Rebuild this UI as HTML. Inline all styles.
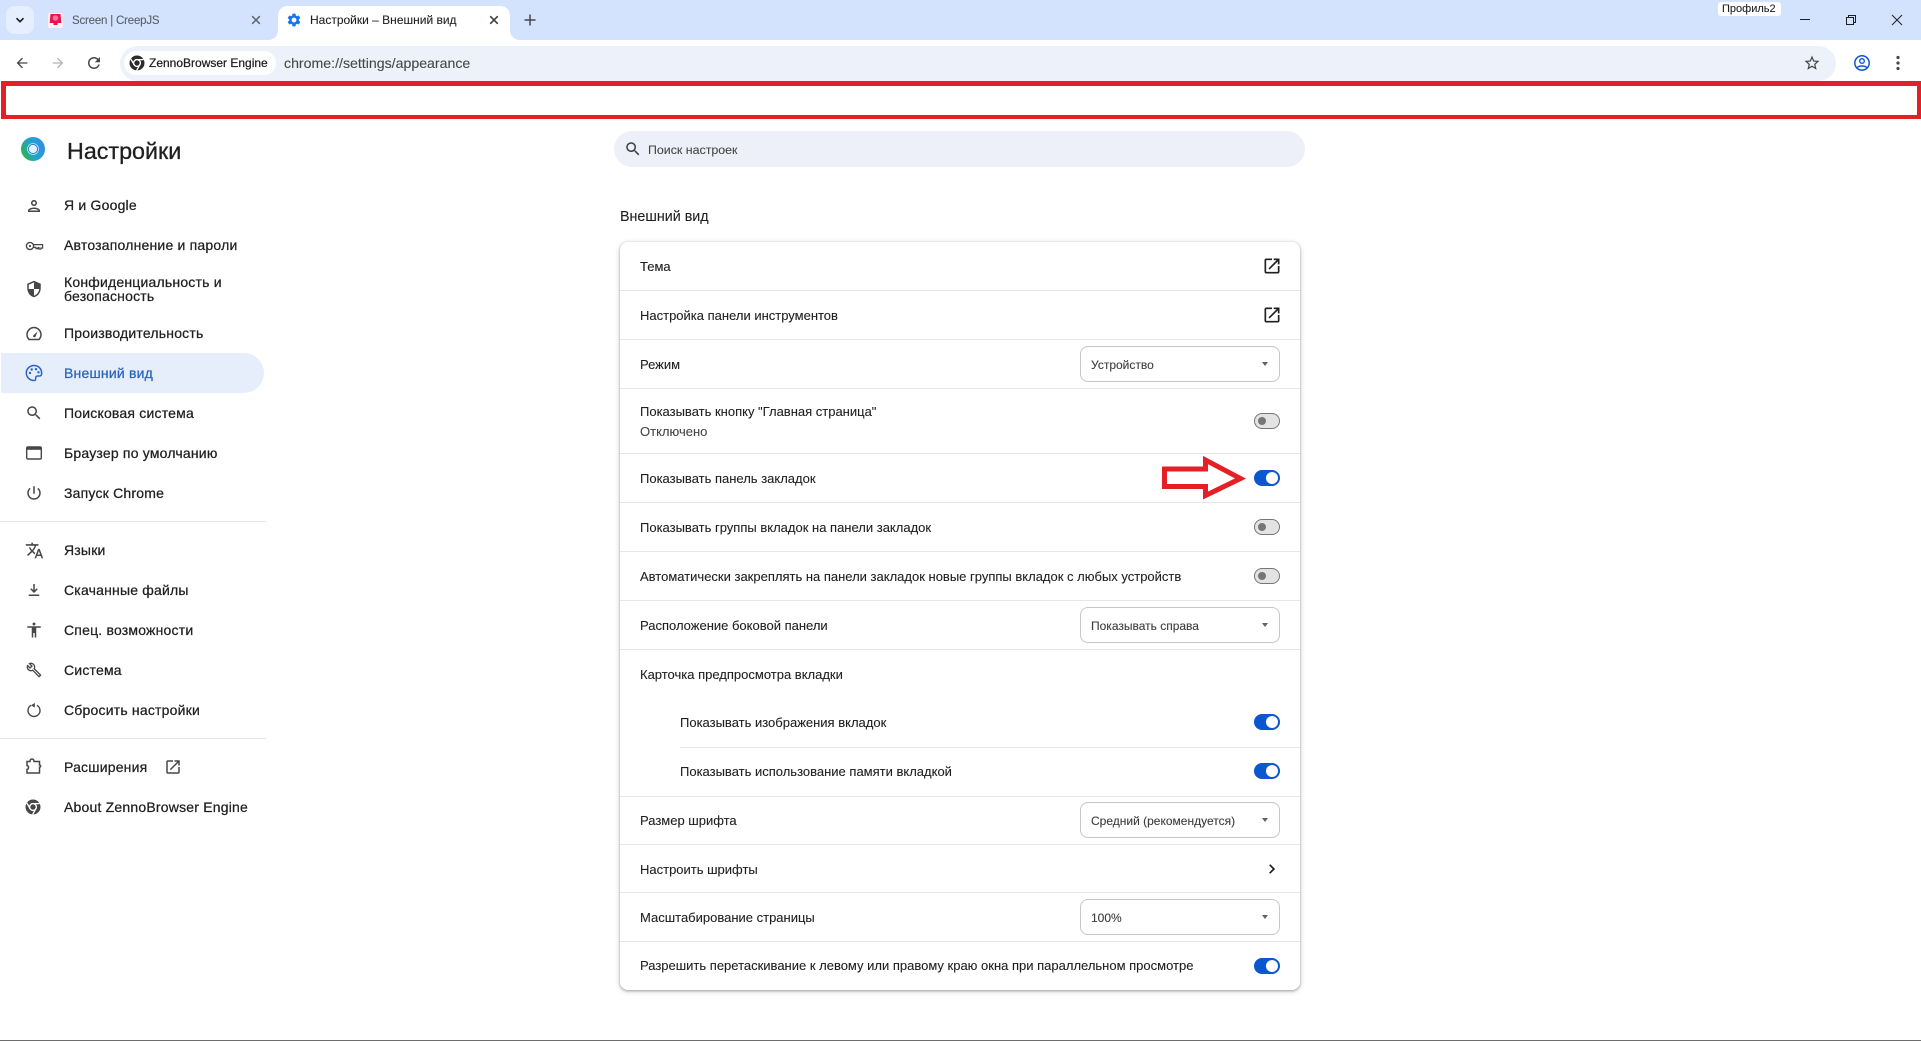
<!DOCTYPE html>
<html lang="ru"><head><meta charset="utf-8"><title>Настройки – Внешний вид</title>
<style>
html,body{margin:0;padding:0;width:1921px;height:1041px;overflow:hidden;background:#fff}
body{position:relative;font-family:"Liberation Sans",sans-serif;color:#1f1f1f}
.a{position:absolute}
.t{position:absolute;white-space:nowrap;line-height:18px;height:18px;font-size:13px;-webkit-text-stroke:.1px currentColor}
.n{font-size:14px;letter-spacing:.2px;-webkit-text-stroke:.25px currentColor;left:64px;color:#1f1f1f;margin-top:-1px}
.c{left:640px}
.r{margin-top:1px}
svg{position:absolute;overflow:visible}
.ic{fill:#474747}
.sep{position:absolute;left:620px;width:680px;height:1px;background:#e6e6e6}
.sel{position:absolute;left:1080px;width:198px;height:34px;border:1px solid #c7c7c7;border-radius:8px;background:#fff}
.sel span{position:absolute;left:10px;top:9px;line-height:18px;font-size:12px;color:#3c3c3c;white-space:nowrap;-webkit-text-stroke:.1px currentColor}
.sel i{position:absolute;left:181px;top:15px;width:0;height:0;border-left:3.5px solid transparent;border-right:3.5px solid transparent;border-top:4px solid #5f6368}
.on,.off{position:absolute;left:1254px;width:26px;height:16px;border-radius:8px;box-sizing:border-box}
.on{background:#0b57d0}
.on:after{content:"";position:absolute;right:2px;top:2px;width:12px;height:12px;border-radius:50%;background:#fff}
.off{background:#e3e3e3;border:1.5px solid #747775}
.off:after{content:"";position:absolute;left:2.5px;top:2.5px;width:8px;height:8px;border-radius:50%;background:#747775}
</style></head><body>

<!-- tab strip -->
<div class="a" style="left:0;top:0;width:1921px;height:40px;background:#d3e3fd"></div>
<div class="a" style="left:6px;top:6px;width:28px;height:28px;border-radius:9px;background:#e6effd"></div>
<svg style="left:14px;top:14px" width="12" height="12" viewBox="0 0 12 12"><path d="M2.5 4.200L6 7.700l3.500-3.500" fill="none" stroke="#1f1f1f" stroke-width="1.700"/></svg>
<!-- creepjs favicon -->
<div class="a" style="left:48px;top:13px;width:15px;height:15px;background:#fdeef2;border-radius:2px"></div>
<svg style="left:49px;top:13px" width="13" height="14" viewBox="0 0 13 14"><path d="M1.500 1h10l.8 9H8.500v2h-4v-2H.7z" fill="#e8134f"/><circle cx="6.500" cy="5" r="2.800" fill="#f8719a"/></svg>
<div class="t" style="left:72px;top:12px;font-size:11.500px;letter-spacing:-.2px;color:#5a5f66">Screen | CreepJS</div>
<svg style="left:251px;top:15px" width="10" height="10" viewBox="0 0 10 10"><path d="M1.200 1.200l7.600 7.600M8.800 1.200L1.200 8.800" stroke="#5f6368" stroke-width="1.500"/></svg>
<!-- active tab -->
<svg style="left:268px;top:6px" width="252" height="34" viewBox="0 0 252 34"><path d="M0 34c6 0 10-4 10-10V10C10 4 14 0 20 0h212c6 0 10 4 10 10v14c0 6 4 10 10 10z" fill="#fff"/></svg>
<svg style="left:286px;top:12px" width="16" height="16" viewBox="0 0 24 24"><path fill="#1a73e8" d="M19.14 12.94c.04-.3.06-.61.06-.94 0-.32-.02-.64-.07-.94l2.03-1.58c.18-.14.23-.41.12-.61l-1.92-3.32c-.12-.22-.37-.29-.59-.22l-2.39.96c-.5-.38-1.03-.7-1.62-.94l-.36-2.54c-.04-.24-.24-.41-.48-.41h-3.84c-.24 0-.43.17-.47.41l-.36 2.54c-.59.24-1.13.57-1.62.94l-2.39-.96c-.22-.08-.47 0-.59.22L2.74 8.87c-.12.21-.08.47.12.61l2.03 1.58c-.05.3-.09.63-.09.94s.02.64.07.94l-2.03 1.58c-.18.14-.23.41-.12.61l1.92 3.32c.12.22.37.29.59.22l2.39-.96c.5.38 1.03.7 1.62.94l.36 2.54c.05.24.24.41.48.41h3.84c.24 0 .44-.17.47-.41l.36-2.54c.59-.24 1.13-.56 1.62-.94l2.39.96c.22.08.47 0 .59-.22l1.92-3.32c.12-.22.07-.47-.12-.61l-2.01-1.58zM12 15.6c-1.98 0-3.6-1.62-3.6-3.6s1.62-3.6 3.6-3.6 3.6 1.62 3.6 3.6-1.62 3.6-3.6 3.6z"/></svg>
<div class="t" style="left:310px;top:11px;font-size:12px;color:#1f1f1f">Настройки – Внешний вид</div>
<svg style="left:489px;top:15px" width="10" height="10" viewBox="0 0 10 10"><path d="M1.200 1.200l7.600 7.600M8.800 1.200L1.200 8.800" stroke="#3c4043" stroke-width="1.600"/></svg>
<svg style="left:524px;top:14px" width="12" height="12" viewBox="0 0 12 12"><path d="M6 .5v11M.5 6h11" stroke="#474747" stroke-width="1.500"/></svg>
<!-- window controls -->
<div class="a" style="left:1718px;top:2px;width:63px;height:14px;background:#fff;border-radius:3px"></div>
<div class="t" style="left:1722px;top:0;font-size:11px;color:#1f1f1f">Профиль2</div>
<svg style="left:1800px;top:19px" width="10" height="2"><path d="M0 .5h10" stroke="#1f1f1f"/></svg>
<svg style="left:1846px;top:15px" width="10" height="10" viewBox="0 0 10 10"><path d="M.5 2.500h7v7h-7zM2.500 2.500v-2h7v7h-2" fill="none" stroke="#1f1f1f"/></svg>
<svg style="left:1892px;top:15px" width="10" height="10" viewBox="0 0 10 10"><path d="M0 0l10 10M10 0L0 10" stroke="#1f1f1f"/></svg>

<!-- toolbar -->
<div class="a" style="left:0;top:40px;width:1921px;height:41px;background:#fff;border-radius:8px 8px 0 0"></div>
<svg style="left:14px;top:55px" width="16" height="16" viewBox="0 0 24 24"><path fill="#474747" d="M20 11H7.83l5.59-5.59L12 4l-8 8 8 8 1.41-1.41L7.83 13H20v-2z"/></svg>
<svg style="left:50px;top:55px" width="16" height="16" viewBox="0 0 24 24"><path fill="#b3b5b8" transform="matrix(-1 0 0 1 24 0)" d="M20 11H7.83l5.59-5.59L12 4l-8 8 8 8 1.41-1.41L7.83 13H20v-2z"/></svg>
<svg style="left:85px;top:54px" width="18" height="18" viewBox="0 0 24 24"><path fill="#474747" d="M17.65 6.35C16.2 4.9 14.21 4 12 4c-4.42 0-7.99 3.58-7.99 8s3.57 8 7.99 8c3.73 0 6.84-2.55 7.73-6h-2.08c-.82 2.33-3.04 4-5.65 4-3.31 0-6-2.69-6-6s2.69-6 6-6c1.66 0 3.14.69 4.22 1.78L13 11h7V4l-2.35 2.35z"/></svg>
<div class="a" style="left:120px;top:46px;width:1716px;height:35px;background:#edf2fa;border-radius:18px"></div>
<div class="a" style="left:124px;top:51px;width:152px;height:24px;background:#fff;border-radius:12px"></div>
<svg style="left:129px;top:55px" width="16" height="16" viewBox="0 0 16 16"><circle cx="8" cy="8" r="7.500" fill="#2b2b2b"/><circle cx="8" cy="8" r="3.400" fill="none" stroke="#fff" stroke-width="1.400"/><path d="M8 4.600h6.600M5.100 9.700L1.800 4M10.900 9.700L7.600 15.400" stroke="#fff" stroke-width="1.300"/></svg>
<div class="t" style="left:149px;top:54px;font-size:12px;-webkit-text-stroke:.25px #1f1f1f;color:#1f1f1f">ZennoBrowser Engine</div>
<div class="t" style="left:284px;top:54px;font-size:14.150px;color:#474747">chrome://settings/appearance</div>
<svg style="left:1803px;top:54px" width="18" height="18" viewBox="0 0 24 24"><path fill="#474747" d="M22 9.24l-7.19-.62L12 2 9.19 8.63 2 9.24l5.46 4.73L5.82 21 12 17.27 18.18 21l-1.63-7.03L22 9.24zM12 15.4l-3.76 2.27 1-4.28-3.32-2.88 4.38-.38L12 6.1l1.71 4.04 4.38.38-3.32 2.88 1 4.28L12 15.4z"/></svg>
<svg style="left:1854px;top:55px" width="16" height="16" viewBox="0 0 16 16"><circle cx="8" cy="8" r="7.200" fill="none" stroke="#0b57d0" stroke-width="1.500"/><circle cx="8" cy="6" r="2.300" fill="none" stroke="#0b57d0" stroke-width="1.400"/><path d="M3.200 12.600C5 10.400 11 10.400 12.800 12.600" fill="none" stroke="#0b57d0" stroke-width="1.500"/></svg>
<svg style="left:1896px;top:55px" width="4" height="16" viewBox="0 0 4 16"><circle cx="2" cy="2.500" r="1.600" fill="#474747"/><circle cx="2" cy="8" r="1.600" fill="#474747"/><circle cx="2" cy="13.500" r="1.600" fill="#474747"/></svg>

<!-- red annotation box -->
<div class="a" style="left:1px;top:81px;width:1920px;height:37.500px;box-sizing:border-box;border:solid #e41f26;border-width:5px 4.500px 4.500px 5px;background:#fff"></div>

<!-- sidebar -->
<svg style="left:21px;top:137px" width="24" height="24" viewBox="0 0 24 24"><defs><linearGradient id="g" x1="0" y1=".7" x2="1" y2=".3"><stop offset="0" stop-color="#2fb344"/><stop offset=".45" stop-color="#22a5c9"/><stop offset="1" stop-color="#2f8cf0"/></linearGradient></defs><circle cx="12" cy="12" r="12" fill="url(#g)"/><circle cx="12" cy="12" r="5.800" fill="#e4f3fb"/><circle cx="12" cy="12" r="4.600" fill="none" stroke="#1f80d0" stroke-width="1"/></svg>
<div class="t" style="left:67px;top:137px;font-size:23.300px;line-height:28px;height:28px;-webkit-text-stroke:.3px #1f1f1f">Настройки</div>

<div class="a" style="left:1px;top:353px;width:263px;height:40px;background:#e6eefb;border-radius:0 20px 20px 0"></div>
<div class="a" style="left:0;top:521px;width:266px;height:1px;background:#e6e6e6"></div>
<div class="a" style="left:0;top:738px;width:266px;height:1px;background:#e6e6e6"></div>

<svg style="left:25px;top:197px" width="18" height="18" viewBox="0 0 24 24"><path class="ic" d="M12 6c1.100 0 2 .9 2 2s-.9 2-2 2-2-.9-2-2 .9-2 2-2m0 10c2.700 0 5.800 1.290 6 2H6c.23-.72 3.310-2 6-2m0-12C9.790 4 8 5.790 8 8s1.790 4 4 4 4-1.790 4-4-1.790-4-4-4zm0 10c-2.670 0-8 1.340-8 4v2h16v-2c0-2.660-5.330-4-8-4z"/></svg>
<div class="t n" style="top:197px">Я и Google</div>
<svg style="left:25px;top:237px" width="18" height="18" viewBox="0 0 18 18"><circle cx="5" cy="9" r="3.600" fill="none" stroke="#474747" stroke-width="1.400"/><circle cx="5" cy="9" r="1.100" fill="#474747"/><path d="M8.600 7.600h9v3.400h-1.600v1h-2v-1.400h-1v1h-2V10.400H8.600" fill="none" stroke="#474747" stroke-width="1.200"/></svg>
<div class="t n" style="top:237px">Автозаполнение и пароли</div>
<svg style="left:25px;top:280px" width="18" height="18" viewBox="0 0 24 24"><path class="ic" d="M12 1L3 5v6c0 5.550 3.840 10.740 9 12 5.160-1.260 9-6.450 9-12V5l-9-4zm0 10.990h7c-.53 4.120-3.280 7.790-7 8.940V12H5V6.300l7-3.110v8.800z"/></svg>
<div class="t n" style="top:274px">Конфиденциальность и</div>
<div class="t n" style="top:288px">безопасность</div>
<svg style="left:25px;top:324px" width="18" height="18" viewBox="0 0 18 18"><path d="M4 15.500h10c1.300-1.500 2.400-3.400 1.900-6C15.300 6 12.300 3.500 9 3.500 5.700 3.500 2.700 6 2.100 9.500c-.5 2.600.6 4.500 1.900 6z" fill="none" stroke="#474747" stroke-width="1.500"/><path d="M8 11.800l4.500-4.300-2 5.300c-.8 1-3 .2-2.500-1z" fill="#474747"/></svg>
<div class="t n" style="top:325px">Производительность</div>
<svg style="left:25px;top:364px" width="18" height="18" viewBox="0 0 18 18"><path d="M9 1.500C4.800 1.500 1.300 4.800 1.300 9S4.800 16.500 9 16.500c1.300 0 1.900-.8 1.700-1.800-.3-1.300.3-2.700 2-2.700h1.800c1.400 0 2.300-1 2.200-2.800C16.500 4.500 13.200 1.500 9 1.500z" fill="none" stroke="#2a63bf" stroke-width="1.500"/><circle cx="5" cy="9" r="1.200" fill="#2a63bf"/><circle cx="6.700" cy="5.500" r="1.200" fill="#2a63bf"/><circle cx="11" cy="5.200" r="1.200" fill="#2a63bf"/><circle cx="13.500" cy="8.300" r="1.200" fill="#2a63bf"/></svg>
<div class="t n" style="top:365px;color:#2a63bf">Внешний вид</div>
<svg style="left:25px;top:404px" width="18" height="18" viewBox="0 0 24 24"><path class="ic" d="M15.500 14h-.79l-.28-.27C15.410 12.590 16 11.110 16 9.500 16 5.910 13.090 3 9.500 3S3 5.910 3 9.500 5.910 16 9.500 16c1.610 0 3.090-.59 4.230-1.570l.27.28v.79l5 4.990L20.490 19l-4.990-5zm-6 0C7.010 14 5 11.990 5 9.500S7.010 5 9.500 5 14 7.010 14 9.500 11.990 14 9.500 14z"/></svg>
<div class="t n" style="top:405px">Поисковая система</div>
<svg style="left:26px;top:445px" width="16" height="16" viewBox="0 0 16 16"><rect x=".7" y="2" width="14.600" height="12" rx="1.300" fill="none" stroke="#474747" stroke-width="1.400"/><rect x="1" y="2.300" width="14" height="2.500" fill="#474747"/></svg>
<div class="t n" style="top:445px">Браузер по умолчанию</div>
<svg style="left:25px;top:484px" width="18" height="18" viewBox="0 0 24 24"><path class="ic" d="M13 3h-2v10h2V3zm4.830 2.170l-1.420 1.420C17.990 7.860 19 9.810 19 12c0 3.870-3.130 7-7 7s-7-3.130-7-7c0-2.190 1.010-4.140 2.580-5.420L6.170 5.170C4.230 6.820 3 9.260 3 12c0 4.970 4.030 9 9 9s9-4.030 9-9c0-2.740-1.230-5.180-3.170-6.830z"/></svg>
<div class="t n" style="top:485px">Запуск Chrome</div>
<svg style="left:25px;top:541px" width="19" height="19" viewBox="0 0 24 24"><path class="ic" d="M12.870 15.070l-2.540-2.510.03-.03c1.740-1.940 2.980-4.170 3.710-6.530H17V4h-7V2H8v2H1v1.990h11.170C11.500 7.920 10.440 9.750 9 11.350 8.070 10.320 7.300 9.190 6.690 8h-2c.73 1.630 1.730 3.170 2.980 4.560l-5.090 5.020L4 19l5-5 3.110 3.110.76-2.040zM18.500 10h-2L12 22h2l1.120-3h4.750L21 22h2l-4.500-12zm-2.620 7l1.620-4.330L19.120 17h-3.240z"/></svg>
<div class="t n" style="top:542px">Языки</div>
<svg style="left:25px;top:581px" width="18" height="18" viewBox="0 0 24 24"><path class="ic" d="M12 16l-5-5 1.410-1.410L11 12.170V4h2v8.170l2.590-2.580L17 11l-5 5zM5 20v-2h14v2H5z"/></svg>
<div class="t n" style="top:582px">Скачанные файлы</div>
<svg style="left:25px;top:621px" width="18" height="18" viewBox="0 0 24 24"><path class="ic" d="M12 2c1.100 0 2 .9 2 2s-.9 2-2 2-2-.9-2-2 .9-2 2-2zm9 7h-6v13h-2v-6h-2v6H9V9H3V7h18v2z"/></svg>
<div class="t n" style="top:622px">Спец. возможности</div>
<svg style="left:26px;top:662px" width="16" height="16" viewBox="0 0 24 24"><path class="ic" d="M22.610 18.990l-9.080-9.080c.93-2.340.45-5.100-1.440-7C9.790.61 6.210.4 3.660 2.250L7.500 6.100 6.080 7.510 2.250 3.690C.4 6.230.61 9.820 2.910 12.110c1.860 1.860 4.570 2.350 6.890 1.480l9.110 9.110c.39.39 1.020.39 1.410 0l2.300-2.300c.4-.38.4-1.010 0-1.410zm-3 1.600l-9.460-9.460c-.61.45-1.290.72-2 .82-1.360.2-2.790-.21-3.830-1.250C3.370 9.760 2.930 8.500 3 7.260l3.090 3.090 4.240-4.240-3.090-3.090c1.240-.07 2.490.37 3.440 1.310 1.080 1.080 1.490 2.570 1.240 3.960-.12.71-.42 1.370-.88 1.960l9.450 9.450-.88.89z"/></svg>
<div class="t n" style="top:662px">Система</div>
<svg style="left:26px;top:702px" width="16" height="16" viewBox="0 0 16 16"><path d="M5 3.300a6 6 0 1 0 6 0" fill="none" stroke="#474747" stroke-width="1.400"/><path d="M8.800 1v4.600L5 3.300z" fill="#474747"/></svg>
<div class="t n" style="top:702px">Сбросить настройки</div>
<svg style="left:26px;top:758px" width="16" height="16" viewBox="0 0 16 16"><path d="M1 3.500h3c0-1.800 1-2.500 2-2.500s2 .7 2 2.500h5.500V7c1.500.2 1.500 2 0 2.200V15H1v-3.500c2-.2 2-3.700 0-4z" fill="none" stroke="#474747" stroke-width="1.500"/></svg>
<div class="t n" style="top:759px">Расширения</div>
<svg style="left:164px;top:758px" width="18" height="18" viewBox="0 0 24 24"><path class="ic" d="M19 19H5V5h7V3H5c-1.110 0-2 .9-2 2v14c0 1.100.89 2 2 2h14c1.100 0 2-.9 2-2v-7h-2v7zM14 3v2h3.590l-9.830 9.830 1.410 1.410L19 6.410V10h2V3h-7z"/></svg>
<svg style="left:25px;top:799px" width="16" height="16" viewBox="0 0 16 16"><circle cx="8" cy="8" r="7.500" fill="#474747"/><circle cx="8" cy="8" r="3.400" fill="none" stroke="#fff" stroke-width="1.400"/><path d="M8 4.600h6.600M5.100 9.700L1.800 4M10.900 9.700L7.600 15.400" stroke="#fff" stroke-width="1.300"/></svg>
<div class="t n" style="top:799px">About ZennoBrowser Engine</div>

<!-- search -->
<div class="a" style="left:614px;top:131px;width:691px;height:36px;border-radius:18px;background:#edf0f9"></div>
<svg style="left:624px;top:140px" width="18" height="18" viewBox="0 0 24 24"><path fill="#3c4043" d="M15.500 14h-.79l-.28-.27C15.410 12.590 16 11.110 16 9.500 16 5.910 13.090 3 9.500 3S3 5.910 3 9.500 5.910 16 9.500 16c1.610 0 3.090-.59 4.230-1.570l.27.28v.79l5 4.990L20.490 19l-4.990-5zm-6 0C7.010 14 5 11.990 5 9.500S7.010 5 9.500 5 14 7.010 14 9.500 11.990 14 9.500 14z"/></svg>
<div class="t" style="left:648px;top:141px;font-size:12.400px;color:#474747">Поиск настроек</div>

<div class="t" style="left:620px;top:208px;font-size:14.300px;color:#1f1f1f">Внешний вид</div>

<!-- card -->
<div class="a" style="left:620px;top:242px;width:680px;height:748px;background:#fff;border-radius:8px;box-shadow:0 1px 2px rgba(60,64,67,.35),0 1px 4px 1px rgba(60,64,67,.2)"></div>
<div class="sep" style="top:290px"></div>
<div class="sep" style="top:339px"></div>
<div class="sep" style="top:388px"></div>
<div class="sep" style="top:453px"></div>
<div class="sep" style="top:502px"></div>
<div class="sep" style="top:551px"></div>
<div class="sep" style="top:600px"></div>
<div class="sep" style="top:649px"></div>
<div class="sep" style="top:747px;left:680px;width:620px"></div>
<div class="sep" style="top:796px"></div>
<div class="sep" style="top:844px"></div>
<div class="sep" style="top:892px"></div>
<div class="sep" style="top:941px"></div>

<div class="t c r" style="top:257px">Тема</div>
<svg style="left:1262px;top:256px" width="20" height="20" viewBox="0 0 24 24"><path fill="#1f1f1f" d="M19 19H5V5h7V3H5c-1.110 0-2 .9-2 2v14c0 1.100.89 2 2 2h14c1.100 0 2-.9 2-2v-7h-2v7zM14 3v2h3.590l-9.830 9.830 1.410 1.410L19 6.410V10h2V3h-7z"/></svg>
<div class="t c r" style="top:306px">Настройка панели инструментов</div>
<svg style="left:1262px;top:305px" width="20" height="20" viewBox="0 0 24 24"><path fill="#1f1f1f" d="M19 19H5V5h7V3H5c-1.110 0-2 .9-2 2v14c0 1.100.89 2 2 2h14c1.100 0 2-.9 2-2v-7h-2v7zM14 3v2h3.590l-9.830 9.830 1.410 1.410L19 6.410V10h2V3h-7z"/></svg>
<div class="t c r" style="top:355px">Режим</div>
<div class="sel" style="top:346px"><span>Устройство</span><i></i></div>
<div class="t c r" style="top:402px">Показывать кнопку "Главная страница"</div>
<div class="t c r" style="top:422px;color:#474747">Отключено</div>
<div class="off" style="top:413px"></div>
<div class="t c r" style="top:469px">Показывать панель закладок</div>
<div class="on" style="top:470px"></div>
<div class="t c r" style="top:518px">Показывать группы вкладок на панели закладок</div>
<div class="off" style="top:519px"></div>
<div class="t c r" style="top:567px">Автоматически закреплять на панели закладок новые группы вкладок с любых устройств</div>
<div class="off" style="top:568px"></div>
<div class="t c r" style="top:616px">Расположение боковой панели</div>
<div class="sel" style="top:607px"><span>Показывать справа</span><i></i></div>
<div class="t c r" style="top:665px">Карточка предпросмотра вкладки</div>
<div class="t r" style="left:680px;top:713px">Показывать изображения вкладок</div>
<div class="on" style="top:714px"></div>
<div class="t r" style="left:680px;top:762px">Показывать использование памяти вкладкой</div>
<div class="on" style="top:763px"></div>
<div class="t c r" style="top:811px">Размер шрифта</div>
<div class="sel" style="top:802px"><span>Средний (рекомендуется)</span><i></i></div>
<div class="t c r" style="top:860px">Настроить шрифты</div>
<svg style="left:1268px;top:864px" width="8" height="10" viewBox="0 0 8 10"><path d="M1.700 .8L5.900 5 1.700 9.200" fill="none" stroke="#1f1f1f" stroke-width="1.700"/></svg>
<div class="t c r" style="top:908px">Масштабирование страницы</div>
<div class="sel" style="top:899px"><span>100%</span><i></i></div>
<div class="t c r" style="top:956px">Разрешить перетаскивание к левому или правому краю окна при параллельном просмотре</div>
<div class="on" style="top:958px"></div>

<!-- red arrow -->
<svg style="left:0;top:0" width="1921" height="1041" viewBox="0 0 1921 1041"><path d="M1164.500 469h41v-9l35 18.500-35 17v-9h-41z" fill="#fff" stroke="#e41f26" stroke-width="5" stroke-linejoin="miter"/></svg>

<div class="a" style="left:0;top:1040px;width:1921px;height:1px;background:#6d6d6d"></div>
</body></html>
